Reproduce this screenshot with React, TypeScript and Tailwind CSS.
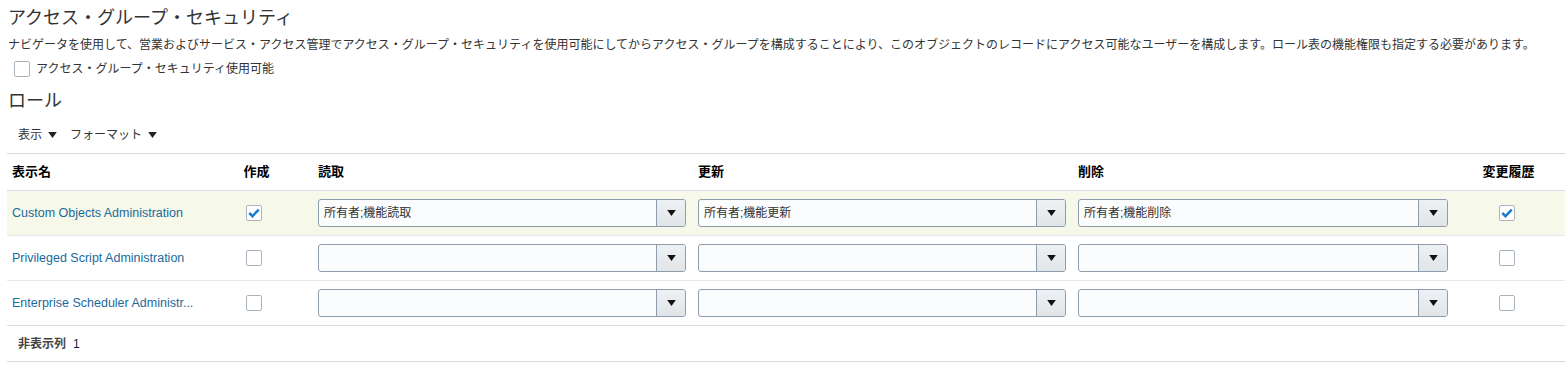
import React from 'react'

const FONT = 'font-["Liberation_Sans","Noto_Sans_CJK_JP",sans-serif]'

type Role = {
  name: string
  create: boolean
  read: string
  update: string
  remove: string
  history: boolean
}

const roles: Role[] = [
  { name: 'Custom Objects Administration', create: true, read: '所有者;機能読取', update: '所有者;機能更新', remove: '所有者;機能削除', history: true },
  { name: 'Privileged Script Administration', create: false, read: '', update: '', remove: '', history: false },
  { name: 'Enterprise Scheduler Administr...', create: false, read: '', update: '', remove: '', history: false },
]

const Check = ({ checked }: { checked: boolean }) => (
  <span className="flex h-4 w-4 items-center justify-center rounded-[2px] border border-[#a9b4be] bg-white">
    {checked && (
      <svg viewBox="0 0 16 16" className="h-[14px] w-[14px]">
        <path d="M2.6 8 L6.3 11.6 L13.4 4.2" fill="none" stroke="#1b7bd0" strokeWidth="2.8" />
      </svg>
    )}
  </span>
)

const Select = ({ value }: { value: string }) => (
  <div className="flex h-[28px] w-full overflow-hidden rounded-[3px] border border-[#8e9cab] bg-[#fbfcfe]">
    <div className="flex flex-1 items-center px-[5px] text-[12px] text-[#333]">{value}</div>
    <div className="flex w-[29px] items-center justify-center border-l border-[#8e9cab] bg-gradient-to-b from-[#eef1f3] to-[#e1e5e8]">
      <svg viewBox="0 0 10 7" className="h-[6px] w-[9px]">
        <path d="M0 0 H10 L5 7 Z" fill="#111" />
      </svg>
    </div>
  </div>
)

const cols = 'grid grid-cols-[194px_111px_380px_380px_380px_113px]'

export default function App() {
  return (
    <div className={`h-[365px] w-[1565px] overflow-hidden bg-white text-[#333] ${FONT}`}>
      <div className="pl-2 pt-[7px]">
        <h1 className="text-[18px] leading-[22px] text-[#333]">アクセス・グループ・セキュリティ</h1>
        <p className="mt-[9px] text-[12px] leading-[14px]">
          ナビゲータを使用して、営業およびサービス・アクセス管理でアクセス・グループ・セキュリティを使用可能にしてからアクセス・グループを構成することにより、このオブジェクトのレコードにアクセス可能なユーザーを構成します。ロール表の機能権限も指定する必要があります。
        </p>
        <label className="mt-[9px] ml-[6px] flex items-center gap-[6px] text-[12px] leading-[16px]">
          <Check checked={false} />
          <span>アクセス・グループ・セキュリティ使用可能</span>
        </label>
        <h2 className="mt-[13px] text-[18px] leading-[22px]">ロール</h2>
        <div className="mt-[16px] ml-[10px] flex items-center gap-[13px] text-[12px] leading-[14px]">
          <span className="flex items-center gap-[6px]">
            表示
            <svg viewBox="0 0 10 7" className="h-[6px] w-[9px]"><path d="M0 0 H10 L5 7 Z" fill="#222" /></svg>
          </span>
          <span className="flex items-center gap-[6px]">
            フォーマット
            <svg viewBox="0 0 10 7" className="h-[6px] w-[9px]"><path d="M0 0 H10 L5 7 Z" fill="#222" /></svg>
          </span>
        </div>
      </div>

      <div className="ml-[7px] mt-[11px] w-[1558px] border-t border-[#d6dee5]">
        <div className={`${cols} h-[37px] items-center border-b border-[#d6dee5] text-[13px] font-bold text-black`}>
          <div className="pl-[5px]">表示名</div>
          <div className="text-center">作成</div>
          <div className="pl-[6px]">読取</div>
          <div className="pl-[6px]">更新</div>
          <div className="pl-[6px]">削除</div>
          <div className="text-center">変更履歴</div>
        </div>
        {roles.map((r, i) => (
          <div
            key={r.name}
            className={`${cols} h-[45px] items-center border-b ${i === 2 ? 'border-[#d6dee5]' : 'border-[#e7e9eb]'} ${i === 0 ? 'bg-[#f6f8ea]' : 'bg-white'}`}
          >
            <div className="truncate pl-[5px] text-[12.5px] text-[#1a6a9c]">{r.name}</div>
            <div className="flex justify-center pr-[5px]"><Check checked={r.create} /></div>
            <div className="px-[6px]"><Select value={r.read} /></div>
            <div className="px-[6px]"><Select value={r.update} /></div>
            <div className="pl-[6px] pr-[4px]"><Select value={r.remove} /></div>
            <div className="flex justify-center pr-[4px]"><Check checked={r.history} /></div>
          </div>
        ))}
        <div className="flex h-[36px] items-center border-b border-[#d6dee5] pl-[11px] text-[12px]">
          <span className="font-bold text-[#444]">非表示列</span>
          <span className="ml-[7px] text-[#1a1a3a]">1</span>
        </div>
      </div>
    </div>
  )
}
